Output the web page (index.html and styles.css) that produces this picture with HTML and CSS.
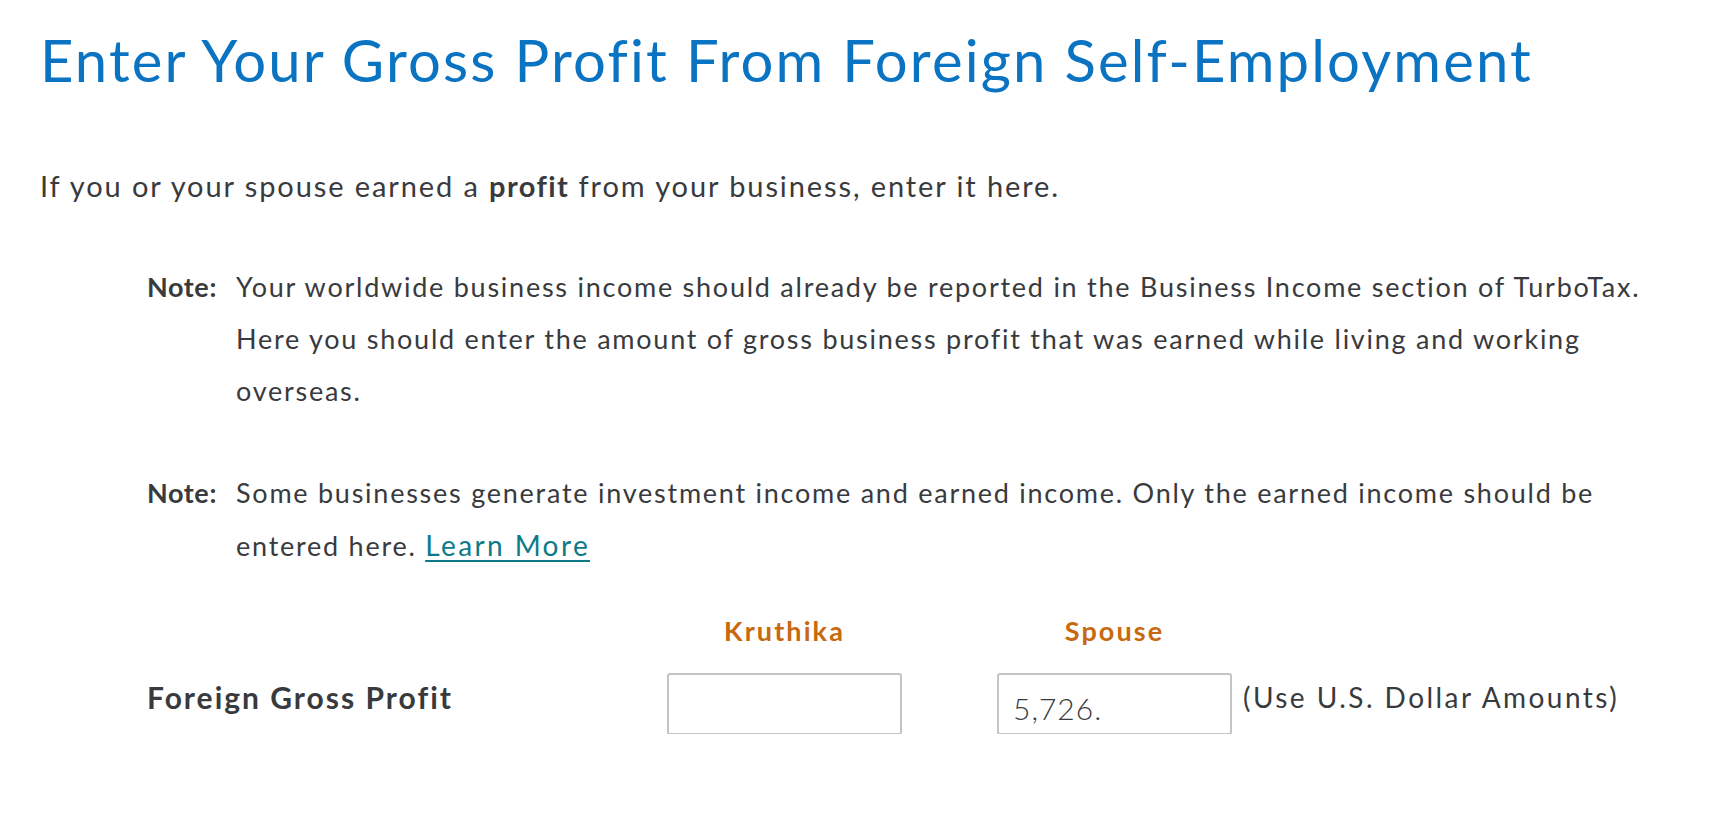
FILE: index.html
```html
<!DOCTYPE html>
<html lang="en">
<head>
<meta charset="utf-8">
<title>Foreign Self-Employment</title>
<link rel="stylesheet" href="styles.css">
</head>
<body>
<main class="page">
  <h1 class="title">Enter Your Gross Profit From Foreign Self-Employment</h1>
  <p class="intro">If you or your spouse earned a <b>profit</b> from your business, enter it here.</p>
  <div class="note">
    <span class="note-label">Note:</span>
    <p class="note-text">Your worldwide business income should already be reported in the Business Income section of TurboTax. Here you should enter the amount of gross business profit that was earned while living and working overseas.</p>
  </div>
  <div class="note note-second">
    <span class="note-label">Note:</span>
    <p class="note-text">Some businesses generate investment income and earned income. Only the earned income should be entered here. <a class="link" href="#">Learn More</a></p>
  </div>
  <div class="form-grid">
    <span class="col-head col-a">Kruthika</span>
    <span class="col-head col-b">Spouse</span>
    <span class="row-label">Foreign Gross Profit</span>
    <input class="amount col-a" type="text" value="">
    <input class="amount col-b" type="text" value="5,726.">
    <span class="hint">(Use U.S. Dollar Amounts)</span>
  </div>
</main>
</body>
</html>
```

FILE: styles.css
```css
html, body {
  margin: 0;
  padding: 0;
  background: #ffffff;
}

body {
  font-family: Lato, "Noto Sans", sans-serif;
  color: #393a3d;
}

.page {
  padding: 20px 0 0 40px;
}

.title {
  margin: 0;
  font-weight: 400;
  font-size: 58px;
  line-height: 80px;
  color: #0a74c2;
  letter-spacing: 2.15px;
}

.intro {
  margin: 66px 0 0 0;
  font-size: 29px;
  line-height: 40px;
  letter-spacing: 1.9px;
}

.intro b {
  font-weight: 700;
  letter-spacing: 1.4px;
}

.note {
  display: flex;
  margin: 55px 0 0 107px;
  font-size: 27px;
  line-height: 52px;
  letter-spacing: 1.75px;
}

.note-second {
  margin-top: 50px;
}

.note-label {
  flex: 0 0 auto;
  width: 89px;
  font-weight: 700;
  letter-spacing: 0.6px;
}

.note-text {
  margin: 0;
  flex: 0 0 auto;
  width: 1440px;
}

.link {
  color: #0d7a88;
  font-size: 28px;
  letter-spacing: 2.4px;
  text-decoration: underline;
  text-decoration-thickness: 2px;
  text-underline-offset: 4px;
}

.form-grid {
  display: grid;
  grid-template-columns: 520px 235px 95px 235px 11px auto;
  grid-template-rows: 50px 61px;
  row-gap: 18px;
  align-items: center;
  margin: 33px 0 0 107px;
}

.col-head {
  grid-row: 1;
  text-align: center;
  font-weight: 700;
  font-size: 27px;
  letter-spacing: 2.1px;
  color: #c8690f;
}

.col-a {
  grid-column: 2;
}

.col-b {
  grid-column: 4;
}

.row-label {
  grid-row: 2;
  grid-column: 1;
  margin-bottom: 14px;
  font-weight: 700;
  font-size: 30px;
  letter-spacing: 2px;
}

.amount {
  grid-row: 2;
  box-sizing: border-box;
  width: 235px;
  height: 62px;
  border: 2px solid #c4c4c4;
  border-radius: 3px;
  padding: 8px 0 0 14px;
  font-family: Lato, "Noto Sans", sans-serif;
  font-weight: 300;
  font-size: 30px;
  letter-spacing: 1px;
  color: #393a3d;
  background: #ffffff;
  outline: none;
}

.hint {
  grid-row: 2;
  grid-column: 6;
  margin-bottom: 14px;
  font-size: 28px;
  letter-spacing: 2.45px;
}
```
